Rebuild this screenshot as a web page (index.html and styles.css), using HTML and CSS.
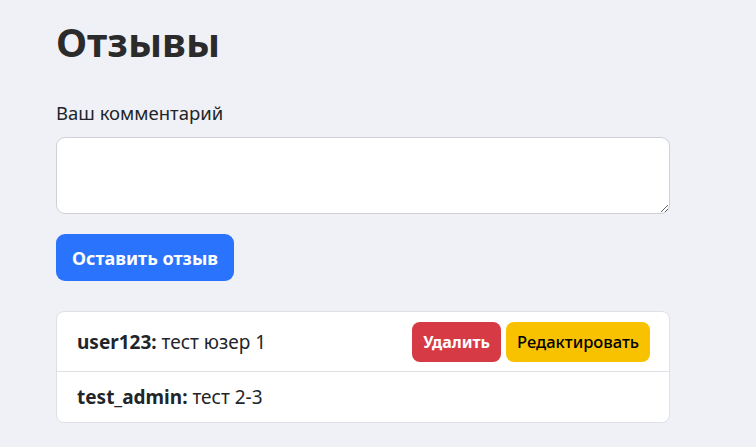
FILE: index.html
```html
<!DOCTYPE html>
<html lang="ru">
<head>
<meta charset="utf-8">
<title>Отзывы</title>
<link rel="stylesheet" href="styles.css">
</head>
<body>
<main class="page">
  <h1 class="title">Отзывы</h1>
  <form class="review-form">
    <label class="label" for="comment">Ваш комментарий</label>
    <textarea id="comment" class="input"></textarea>
    <button type="button" class="btn btn-primary">Оставить отзыв</button>
  </form>
  <ul class="reviews">
    <li class="review">
      <span class="review-text"><b>user123:</b> тест юзер 1</span>
      <span class="actions">
        <button type="button" class="btn btn-sm btn-danger">Удалить</button>
        <button type="button" class="btn btn-sm btn-warning">Редактировать</button>
      </span>
    </li>
    <li class="review">
      <span class="review-text"><b>test_admin:</b> тест 2-3</span>
    </li>
  </ul>
</main>
</body>
</html>
```

FILE: styles.css
```css
html, body {
  margin: 0;
  padding: 0;
  background: #f0f1f6;
  color: #212529;
  font-family: "Noto Sans", "Open Sans", sans-serif;
  font-size: 18px;
}
.page {
  width: 614px;
  padding: 16px 0 0 56px;
}
.title {
  margin: 0;
  font-size: 40px;
  font-weight: 700;
  line-height: 52px;
  color: #2b2b2b;
}
.review-form {
  display: flex;
  flex-direction: column;
  align-items: flex-start;
  margin-top: 32px;
}
.label {
  font-size: 18.5px;
  line-height: 26px;
  margin-bottom: 11px;
}
.input {
  box-sizing: border-box;
  width: 614px;
  height: 77px;
  border: 1px solid #cfd1d6;
  border-radius: 9px;
  background: #fff;
  margin: 0;
  font: inherit;
}
.btn {
  border: 0;
  border-radius: 9px;
  font-family: inherit;
  font-weight: 700;
  cursor: pointer;
}
.btn-primary {
  margin-top: 20px;
  width: 178px;
  height: 47px;
  background: #2a73fd;
  color: #fff;
  font-size: 18px;
}
.reviews {
  list-style: none;
  margin: 30px 0 0;
  padding: 0;
  background: #fff;
  border: 1px solid #dee0e5;
  border-radius: 8px;
}
.review {
  display: flex;
  align-items: center;
  justify-content: space-between;
  padding: 0 19px 0 20px;
  height: 59px;
  font-size: 19px;
}
.review + .review {
  border-top: 1px solid #dee0e5;
  height: 50px;
}
.actions {
  display: flex;
  gap: 5px;
}
.btn-sm {
  height: 40px;
  padding: 0 11px;
  font-size: 16px;
  border-radius: 8px;
}
.btn-danger {
  background: #d63a44;
  color: #fff;
}
.btn-warning {
  background: #f8c200;
  color: #000;
  font-weight: 500;
  font-size: 16.5px;
}
```
